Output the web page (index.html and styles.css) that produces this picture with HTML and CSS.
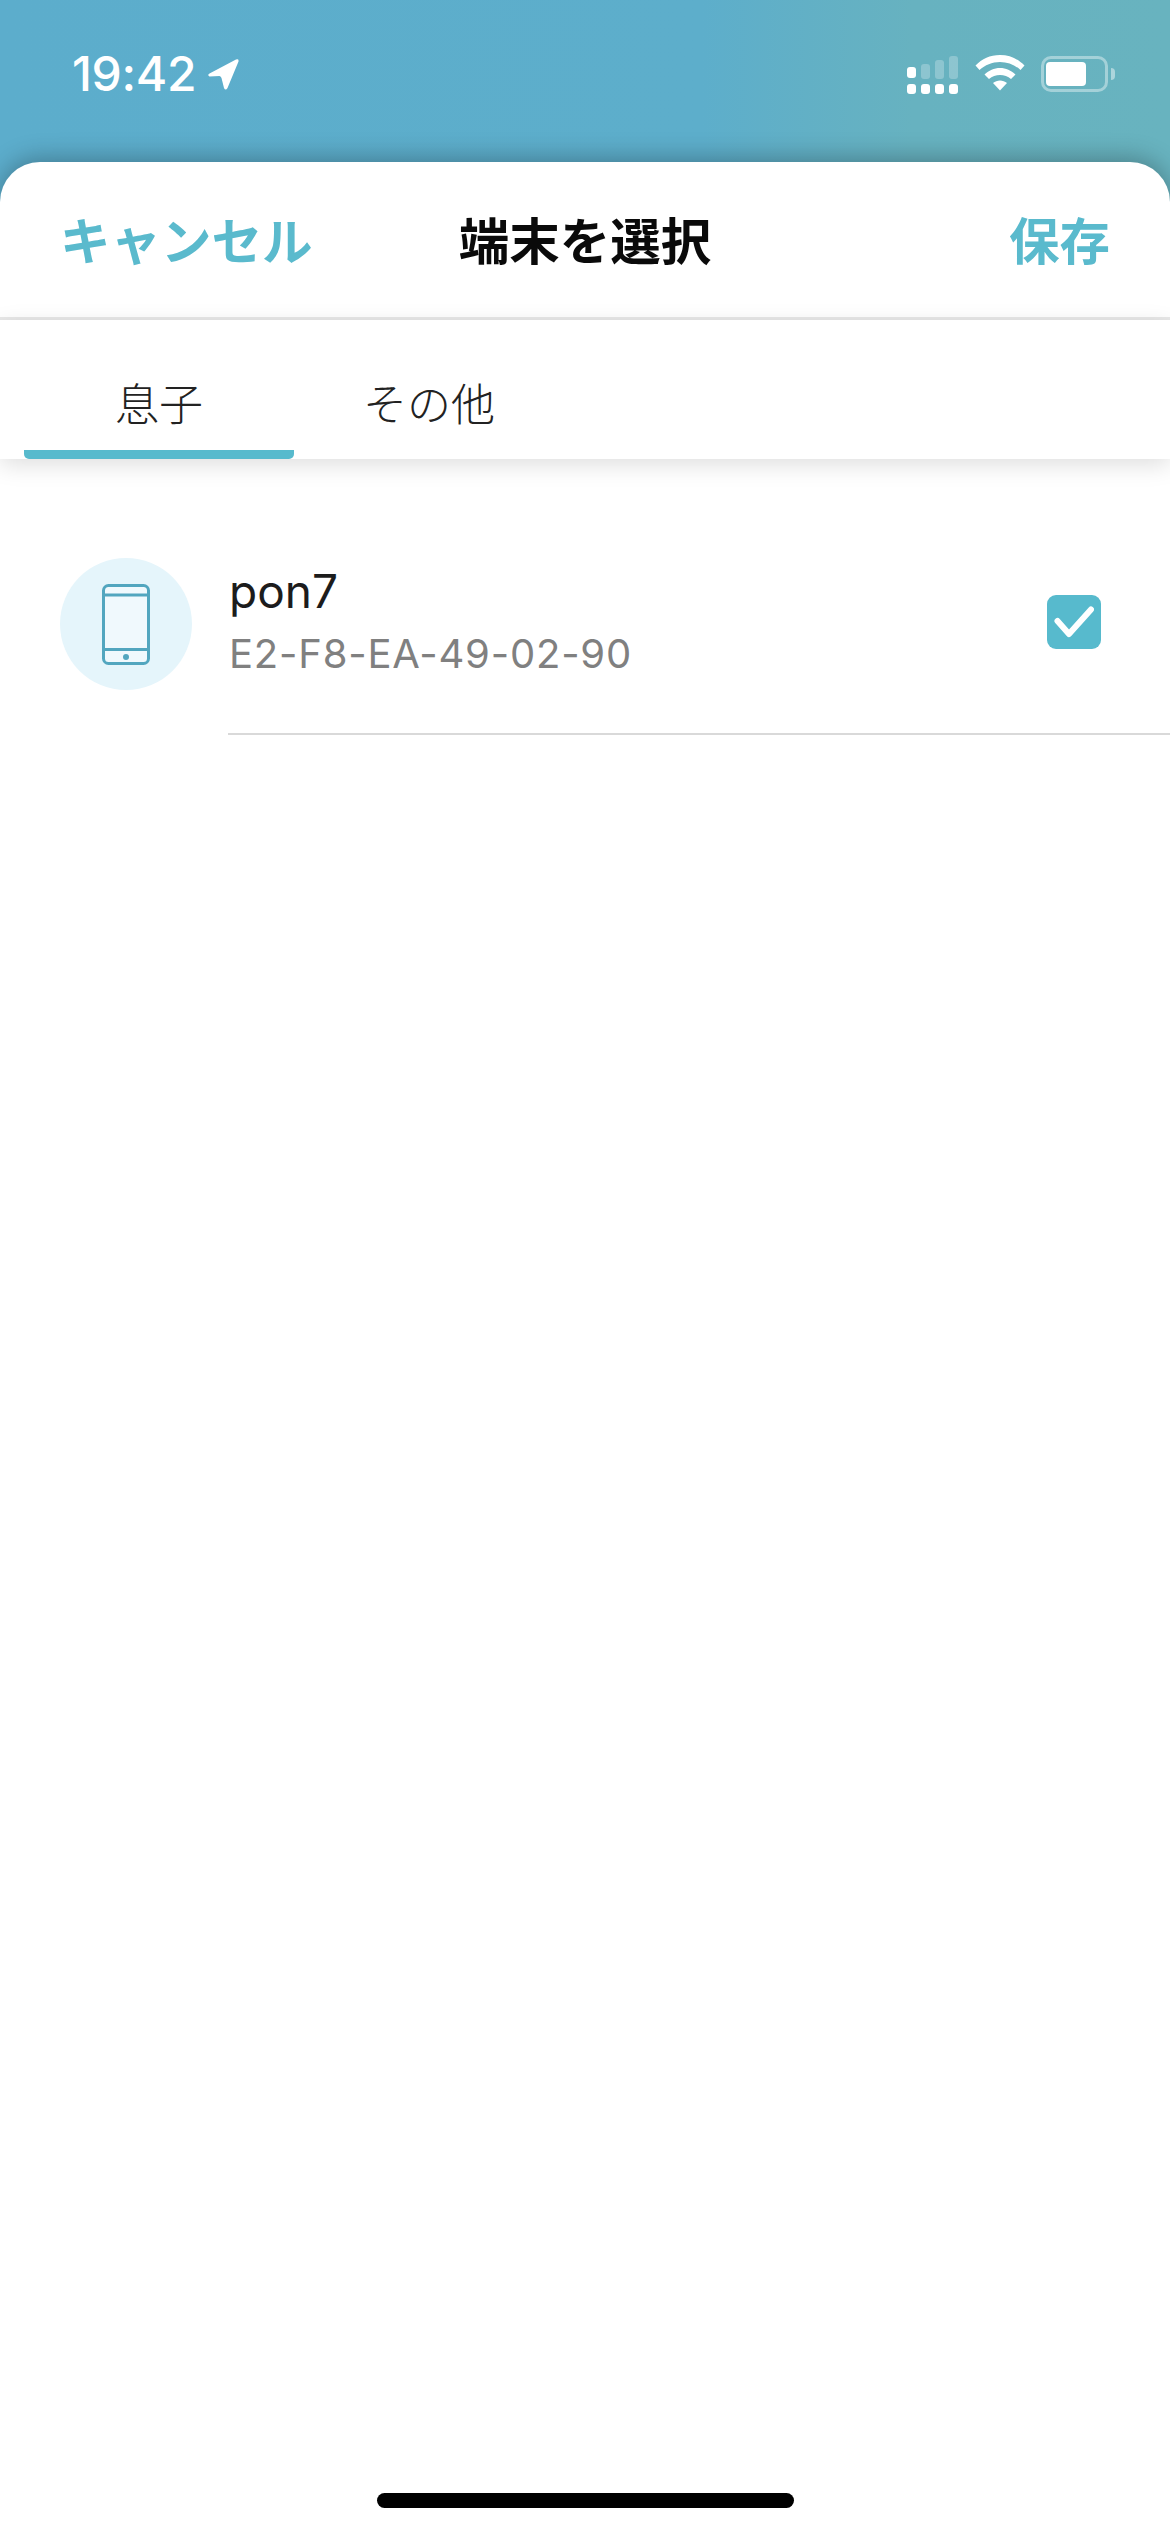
FILE: index.html
```html
<!DOCTYPE html>
<html lang="ja">
<head>
<meta charset="utf-8">
<title>端末を選択</title>
<link rel="stylesheet" href="styles.css">
</head>
<body>
<div class="screen">
  <div class="status">
    <div class="status-left">
      <span class="time">19:42</span>
      <svg class="loc" width="32" height="32" viewBox="0 0 32 32"><path d="M2.500 15.500 L29 1.500 Q32 0.500 31.500 3.500 L20.500 30 Q18.500 33 17 30 L14.500 20 Q14 18.500 12.500 18 L2.500 18.600 Q0 17 2.500 15.500Z" fill="#fff"/></svg>
    </div>
    <div class="status-right">
      <svg class="signal" width="52" height="38" viewBox="0 0 52 38">
        <g fill="#fff">
          <rect x="0" y="11" width="9" height="11" rx="3"/>
          <rect x="0" y="28" width="9" height="10" rx="3"/>
          <rect x="14" y="28" width="9" height="10" rx="3"/>
          <rect x="28" y="28" width="9" height="10" rx="3"/>
          <rect x="42" y="28" width="9" height="10" rx="3"/>
        </g>
        <g fill="#fff" fill-opacity=".25">
          <rect x="14" y="8" width="9" height="15" rx="3"/>
          <rect x="28" y="4" width="9" height="19" rx="3"/>
          <rect x="42" y="0" width="9" height="23" rx="3"/>
        </g>
      </svg>
      <svg class="wifi" width="50" height="36" viewBox="0 0 50 36">
        <path d="M25 0C35 0 43 4 49.500 10.500L45.500 15C40 10 33 7 25 7S10 10 4.500 15L.5 10.500C7 4 15 0 25 0Z" fill="#fff"/>
        <path d="M25 13C31 13 36 15.500 40.500 19.500L36 24C33 21.500 29 20 25 20S17 21.500 14 24L9.500 19.500C14 15.500 19 13 25 13Z" fill="#fff"/>
        <path d="M25 25.500C27.500 25.500 30 26.500 32 28L25 35.500L18 28C20 26.500 22.500 25.500 25 25.500Z" fill="#fff"/>
      </svg>
      <div class="battery"><div class="battery-fill"></div></div>
      <div class="battery-cap"></div>
    </div>
  </div>
  <div class="sheet">
    <header class="nav">
      <span class="nav-action">キャンセル</span>
      <span class="nav-title">端末を選択</span>
      <span class="nav-action">保存</span>
    </header>
    <nav class="tabs">
      <div class="tab tab-active">息子</div>
      <div class="tab">その他</div>
    </nav>
    <section class="list">
      <div class="row">
        <div class="avatar">
          <svg width="48" height="81" viewBox="0 0 48 81" fill="none">
            <rect x="1.500" y="1.500" width="45" height="78" rx="5" fill="#f0f9fd" stroke="#52a6bf" stroke-width="3"/>
            <path d="M1.500 11H46.500M1.500 65.500H46.500" stroke="#52a6bf" stroke-width="3"/>
            <circle cx="24" cy="73" r="3" fill="#52a6bf"/>
          </svg>
        </div>
        <div class="row-body">
          <div class="row-main">
            <div class="row-name">pon7</div>
            <div class="row-mac">E2-F8-EA-49-02-90</div>
          </div>
          <div class="check">
            <svg width="40" height="32" viewBox="0 0 40 32" fill="none"><path d="M3.500 15L15 28L37 3.500" stroke="#fff" stroke-width="6" stroke-linecap="round" stroke-linejoin="round"/></svg>
          </div>
        </div>
      </div>
    </section>
    <div class="home-bar"></div>
  </div>
</div>
</body>
</html>
```
FILE: styles.css
```css
* { box-sizing: border-box; }
html, body { margin: 0; padding: 0; }
body {
  width: 1170px;
  height: 2532px;
  overflow: hidden;
  font-family: "Inter", "Noto Sans CJK JP", sans-serif;
  background: #fff;
}
.screen {
  width: 1170px;
  height: 2532px;
  display: flex;
  flex-direction: column;
  background: linear-gradient(90deg, #5cadcc 0%, #5daecb 60%, #67b2c0 78%, #68b3bf 100%);
}
.status {
  height: 162px;
  flex: none;
  display: flex;
  justify-content: space-between;
  padding: 50px 0 0 72px;
  color: #fff;
}
.status-left { display: flex; align-items: flex-start; gap: 11px; }
.time { font-size: 48px; line-height: 48px; font-weight: 500; letter-spacing: -0.3px; }
.loc { margin-top: 8px; }
.status-right { display: flex; align-items: flex-start; padding: 6px 55px 0 0; }
.wifi { margin: -1px 0 0 16px; }
.battery {
  width: 67px;
  height: 36px;
  margin: 0 0 0 16px;
  border: 3px solid rgba(255, 255, 255, .4);
  border-radius: 10px;
  padding: 3px 2px;
}
.battery-fill { width: 40px; height: 24px; background: #fff; border-radius: 4px; }
.battery-cap {
  width: 4px;
  height: 12px;
  margin: 12px 0 0 3px;
  background: rgba(255, 255, 255, .45);
  border-radius: 0 6px 6px 0;
}
.sheet {
  flex: 1;
  display: flex;
  flex-direction: column;
  position: relative;
  background: #fff;
  border-radius: 40px 40px 0 0;
  box-shadow: 0 -4px 24px rgba(0, 0, 0, .28);
}
.nav {
  height: 158px;
  flex: none;
  display: flex;
  align-items: center;
  justify-content: space-between;
  padding: 0 60px 4px 60px;
  border-bottom: 3px solid #e8e8e8;
  font-size: 50.5px;
  font-family: "Noto Sans CJK JP", sans-serif;
  font-weight: 700;
  white-space: nowrap;
}
.nav-action { color: #5abacd; width: 260px; }
.nav-action:last-child { text-align: right; }
.nav-title { color: #0a0a0a; }
.tabs {
  height: 139px;
  flex: none;
  display: flex;
  padding: 0 0 0 24px;
  position: relative;
  z-index: 1;
  background: #fff;
  box-shadow: 0 6px 22px rgba(0, 0, 0, .13);
}
.tab {
  width: 270px;
  height: 139px;
  padding-top: 51px;
  text-align: center;
  font-family: "Noto Sans CJK JP", sans-serif;
  font-size: 44px;
  line-height: 62px;
  font-weight: 300;
  color: #222;
}
.tab-active { border-bottom: 9px solid #57bacd; border-radius: 0 0 5px 5px; }
.row { display: flex; padding: 99px 0 0 60px; align-items: flex-start; }
.avatar {
  width: 132px;
  height: 132px;
  flex: none;
  display: flex;
  align-items: center;
  justify-content: center;
  border-radius: 50%;
  background: #e5f5fb;
}
.row-body {
  flex: 1;
  margin-left: 36px;
  height: 197px;
  margin-top: -20px;
  padding: 20px 69px 0 1px;
  display: flex;
  justify-content: space-between;
  border-bottom: 2px solid #d9d9d9;
}
.row-name { font-size: 46px; line-height: 56px; color: #1c1c1c; margin-top: 5px; }
.row-mac { font-size: 40px; line-height: 48px; color: #808080; margin-top: 11px; letter-spacing: 0.8px; }
.check {
  width: 54px;
  height: 54px;
  margin-top: 37px;
  display: flex;
  align-items: center;
  justify-content: center;
  background: #57bacd;
  border-radius: 9px;
}
.home-bar {
  position: absolute;
  left: 377px;
  bottom: 24px;
  width: 417px;
  height: 15px;
  background: #000;
  border-radius: 8px;
}
```
